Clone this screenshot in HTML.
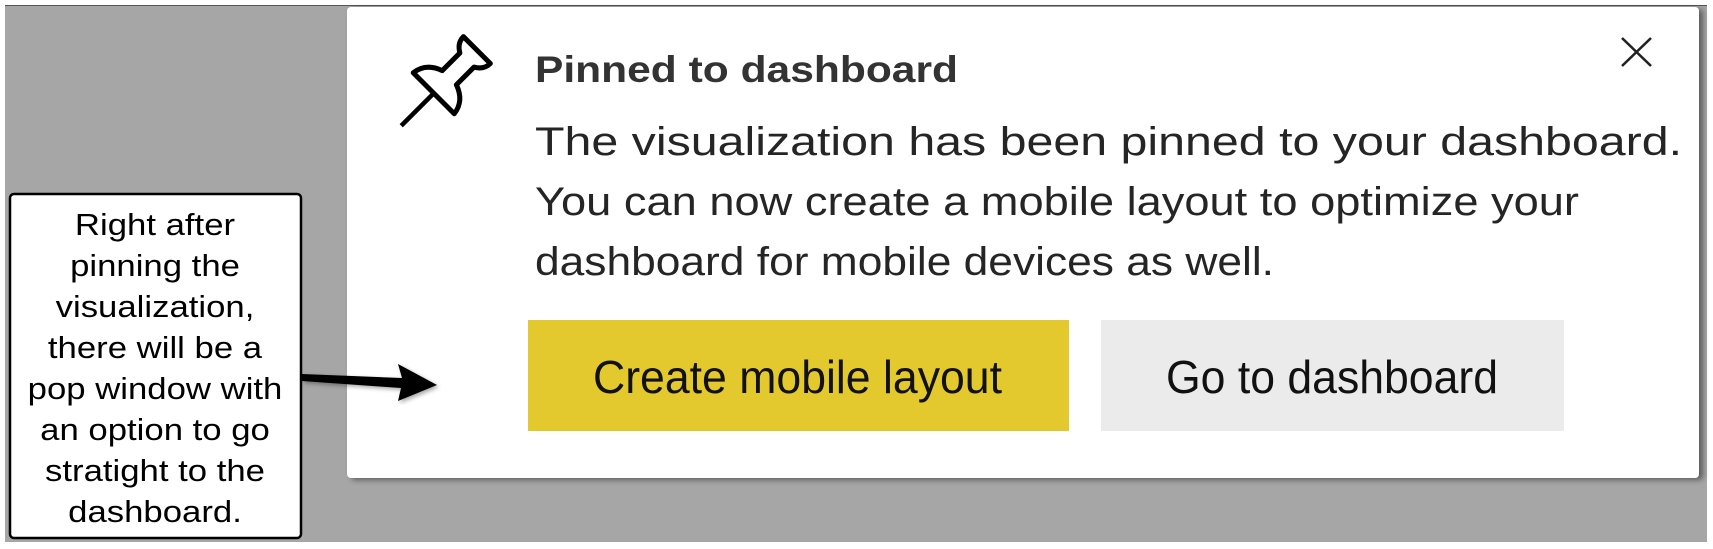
<!DOCTYPE html>
<html><head><meta charset="utf-8"><style>
html,body{margin:0;padding:0;background:#fff;}
svg{display:block}
</style></head><body>
<svg width="1713" height="549" viewBox="0 0 1713 549" xmlns="http://www.w3.org/2000/svg">
<defs>
<filter id="sh" x="-5%" y="-5%" width="110%" height="115%"><feDropShadow dx="4" dy="2" stdDeviation="3" flood-color="#000" flood-opacity="0.45"/></filter>
<filter id="ash"><feDropShadow dx="2" dy="2" stdDeviation="2" flood-color="#000" flood-opacity="0.35"/></filter>
</defs>
<rect x="5" y="5" width="1702" height="537" fill="#a6a6a6"/>
<line x1="5" y1="5.5" x2="1707" y2="5.5" stroke="#555" stroke-width="1"/>
<rect x="347" y="7" width="1352" height="471" rx="4" fill="#fff" filter="url(#sh)"/>
<!-- pin -->
<g transform="translate(438,89) rotate(45)" fill="#fff" stroke="#000" stroke-width="5" stroke-linejoin="round">
<path d="M -19,-55 L 19,-55 Q 19,-46 10,-41 L 10,-16 Q 27,-10 29,6 L -29,6 Q -27,-10 -10,-16 L -10,-41 Q -19,-46 -19,-55 Z"/>
<path d="M0,6 L0,52" stroke-width="4.5"/>
</g>
<!-- close -->
<path d="M1622,38 L1651,66 M1651,38 L1622,66" stroke="#222" stroke-width="2.6"/>
<g font-family="'Liberation Sans',sans-serif" fill="#252525">
<text x="535" y="82" font-size="37" font-weight="bold" textLength="423" lengthAdjust="spacingAndGlyphs" fill="#333">Pinned to dashboard</text>
<text x="535" y="155" font-size="40" textLength="1147" lengthAdjust="spacingAndGlyphs">The visualization has been pinned to your dashboard.</text>
<text x="535" y="215" font-size="40" textLength="1044" lengthAdjust="spacingAndGlyphs">You can now create a mobile layout to optimize your</text>
<text x="535" y="275" font-size="40" textLength="739" lengthAdjust="spacingAndGlyphs">dashboard for mobile devices as well.</text>
</g>
<rect x="528" y="320" width="541" height="111" fill="#e3c92d"/>
<rect x="1101" y="320" width="463" height="111" fill="#ebebeb"/>
<g font-family="'Liberation Sans',sans-serif" fill="#111" font-size="46">
<text x="593" y="393" textLength="409" lengthAdjust="spacingAndGlyphs">Create mobile layout</text>
<text x="1166" y="393" textLength="332" lengthAdjust="spacingAndGlyphs">Go to dashboard</text>
</g>
<!-- callout -->
<rect x="10" y="194" width="291" height="344" rx="4" fill="#fff" stroke="#000" stroke-width="2.5"/>
<g transform="translate(155,0) scale(1.12,1)" font-family="'Liberation Sans',sans-serif" font-size="31" fill="#000" text-anchor="middle">
<text x="0" y="235">Right after</text>
<text x="0" y="276">pinning the</text>
<text x="0" y="317">visualization,</text>
<text x="0" y="358">there will be a</text>
<text x="0" y="399">pop window with</text>
<text x="0" y="440">an option to go</text>
<text x="0" y="481">stratight to the</text>
<text x="0" y="522">dashboard.</text>
</g>
<!-- arrow -->
<g filter="url(#ash)">
<path d="M302,374 L402,378 L398,364 L437,385 L398,401 L401,388 L302,381 Z" fill="#000"/>
</g>
</svg>
</body></html>
